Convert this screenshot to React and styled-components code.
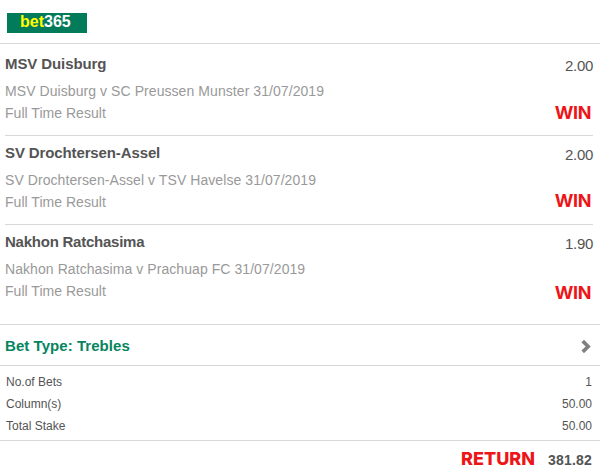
import React from 'react'
import styled, { createGlobalStyle } from 'styled-components'


const GlobalStyle = createGlobalStyle`
    body {
        margin: 0;
        background: #fff;
        font-family: "Liberation Sans", Arial, sans-serif;
        color: #545454;
    }
`

const Slip = styled.div`
    width: 600px;
    height: 475px;
    overflow: hidden;
`

const Header = styled.header`
    box-sizing: border-box;
    height: 44px;
    padding: 13px 7px 0;
    border-bottom: 1px solid #d7d7d7;
`

const Logo = styled.div`
    box-sizing: border-box;
    width: 80px;
    height: 20px;
    padding-left: 13px;
    background: #027b5b;
    color: #fff;
    font-size: 16px;
    font-weight: bold;
    line-height: 18px;

    span {
        color: #ffff00;
    }
`

const Selections = styled.div`
    box-sizing: border-box;
    height: 281px;
    padding: 0 7px 0 5px;
`

const Selection = styled.div`
    box-sizing: border-box;
    display: flex;
    justify-content: space-between;
    height: ${props => props.$height}px;
    padding-top: ${props => props.$top}px;
    border-bottom: ${props => props.$last ? 'none' : '1px solid #d7d7d7'};
`

const Name = styled.div`
    height: 25px;
    font-size: 15px;
    font-weight: bold;
    line-height: 18px;
    letter-spacing: ${props => props.$spacing}px;
`

const Detail = styled.div`
    color: #999;
    font-size: 14px;
    line-height: 22px;
    letter-spacing: ${props => props.$spacing || 0}px;
`

const Outcome = styled.div`
    display: flex;
    flex-direction: column;
    align-items: flex-end;
`

const Odds = styled.div`
    height: ${props => props.$height}px;
    padding-top: 2px;
    font-size: 15px;
    line-height: 18px;
    letter-spacing: -0.3px;
`

const Stamp = styled.span`
    color: #ed1518;
    font-family: Inter, "Liberation Sans", sans-serif;
    font-size: 18px;
    font-weight: ${props => props.$weight || 800};
    line-height: 20px;
    letter-spacing: ${props => props.$spacing || 0}px;
    margin-right: ${props => props.$right}px;
`

const BetType = styled.div`
    box-sizing: border-box;
    display: flex;
    align-items: center;
    justify-content: space-between;
    height: 42px;
    padding: 2px 9px 0 5px;
    border: 1px solid #d7d7d7;
    border-width: 1px 0;
    margin-top: -1px;
    color: #05845f;
    font-size: 15px;
    font-weight: bold;
    letter-spacing: 0.05px;

    span {
        padding-bottom: 2px;
    }
`

const Stakes = styled.div`
    box-sizing: border-box;
    height: 75px;
    padding: 5px 8px 0 6px;
    border-bottom: 1px solid #d7d7d7;
`

const StakeRow = styled.div`
    display: flex;
    justify-content: space-between;
    font-size: 12px;
    line-height: 22px;
`

const Footer = styled.footer`
    display: flex;
    align-items: center;
    justify-content: flex-end;
    height: 36px;
    padding-right: 8px;
`

const Total = styled.span`
    padding-top: 2px;
    font-size: 14px;
    font-weight: bold;
    letter-spacing: 0.2px;
    line-height: 20px;
`

const selections = [
    { name: 'MSV Duisburg', match: 'MSV Duisburg v SC Preussen Munster 31/07/2019', odds: '2.00', height: 92, top: 11, drop: 46, spacing: -0.1 },
    { name: 'SV Drochtersen-Assel', match: 'SV Drochtersen-Assel v TSV Havelse 31/07/2019', odds: '2.00', height: 89, top: 8, drop: 45, spacing: -0.12 },
    { name: 'Nakhon Ratchasima', match: 'Nakhon Ratchasima v Prachuap FC 31/07/2019', odds: '1.90', height: 99, top: 8, drop: 48, spacing: -0.24 },
]

const stakes = [
    ['No.of Bets', '1'],
    ['Column(s)', '50.00'],
    ['Total Stake', '50.00'],
]

function App() {
    return (
        <Slip>
            <GlobalStyle />
            <Header>
                <Logo><span>bet</span>365</Logo>
            </Header>
            <Selections>
                {selections.map((item, i) => (
                    <Selection key={item.name} $height={item.height} $top={item.top} $last={i === selections.length - 1}>
                        <div>
                            <Name $spacing={item.spacing}>{item.name}</Name>
                            <Detail $spacing={0.07}>{item.match}</Detail>
                            <Detail $spacing={0.03}>Full Time Result</Detail>
                        </div>
                        <Outcome>
                            <Odds $height={item.drop}>{item.odds}</Odds>
                            <Stamp $right={2} $spacing={-0.4} $weight={700}>WIN</Stamp>
                        </Outcome>
                    </Selection>
                ))}
            </Selections>
            <BetType>
                <span>Bet Type: Trebles</span>
                <svg width="10" height="14" viewBox="0 0 10 14">
                    <path d="M1.7 2.1L7.2 7.5L1.7 12.9" fill="none" stroke="#808080" strokeWidth="3.6" />
                </svg>
            </BetType>
            <Stakes>
                {stakes.map(([label, value]) => (
                    <StakeRow key={label}>
                        <span>{label}</span>
                        <span>{value}</span>
                    </StakeRow>
                ))}
            </Stakes>
            <Footer>
                <Stamp $right={13}>RETURN</Stamp>
                <Total>381.82</Total>
            </Footer>
        </Slip>
    )
}

export default App
